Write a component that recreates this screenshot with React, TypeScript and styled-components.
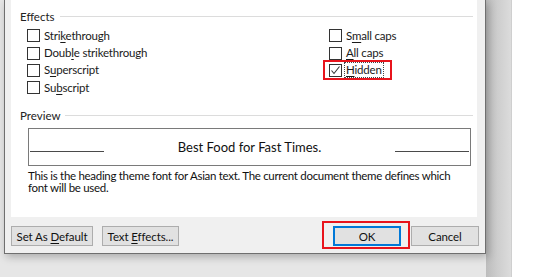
import * as React from "react";
import styled, { createGlobalStyle } from "styled-components";

const GlobalStyle = createGlobalStyle`
    html, body {
        margin: 0;
        padding: 0;
        background: #ffffff;
        overflow: hidden;
    }
    body {
        font-family: Lato, "Noto Sans", sans-serif;
        font-size: 11.5px;
        color: #1a1a1a;
    }
`;

interface IEffect {
    before: string;
    key: string;
    after: string;
    checked?: boolean;
    focused?: boolean;
}

const leftEffects: IEffect[] = [
    { before: "Stri", key: "k", after: "ethrough" },
    { before: "Doub", key: "l", after: "e strikethrough" },
    { before: "S", key: "u", after: "perscript" },
    { before: "Su", key: "b", after: "script" }
];

const rightEffects: IEffect[] = [
    { before: "S", key: "m", after: "all caps" },
    { before: "", key: "A", after: "ll caps" },
    { before: "", key: "H", after: "idden", checked: true, focused: true }
];

const CheckItem: React.FC<{ effect: IEffect }> = ({ effect }) => (
    <Row>
        <Box>
            {effect.checked && (
                <svg width="11" height="11" viewBox="0 0 11 11">
                    <path d="M1.5 5.5 L4 8.5 L9.5 1.5" fill="none" stroke="#333" strokeWidth="1.1" />
                </svg>
            )}
        </Box>
        <Label $focused={effect.focused}>
            {effect.before}
            <u>{effect.key}</u>
            {effect.after}
        </Label>
        {effect.focused && <Highlight $top={-2} $left={-6} $width={69} $height={20} />}
    </Row>
);

const App: React.FC = () => {
    return (
        <>
            <GlobalStyle />
            <Backdrop>
                <Dialog>
                    <Panel>
                        <Legend>
                            <span>Effects</span>
                        </Legend>
                        <EffectsGrid>
                            <Column>
                                {leftEffects.map(e => (
                                    <CheckItem key={e.before + e.key} effect={e} />
                                ))}
                            </Column>
                            <Column>
                                {rightEffects.map(e => (
                                    <CheckItem key={e.before + e.key} effect={e} />
                                ))}
                            </Column>
                        </EffectsGrid>
                        <Legend $gap={11}>
                            <span>Preview</span>
                        </Legend>
                        <PreviewBox>
                            <Rule />
                            <PreviewText>Best Food for Fast Times.</PreviewText>
                            <Rule />
                        </PreviewBox>
                        <Note>
                            This is the heading theme font for Asian text. The current document theme defines which
                            <br />
                            font will be used.
                        </Note>
                    </Panel>
                    <ButtonRow>
                        <Button $width={82}>
                            Set As <u>D</u>efault
                        </Button>
                        <Button $width={77}>
                            Text <u>E</u>ffects...
                        </Button>
                        <Spacer />
                        <OkWrap>
                            <Button $width={68} $primary>
                                OK
                            </Button>
                            <Highlight $top={-5} $left={-11} $width={88} $height={28} />
                        </OkWrap>
                        <Button $width={68}>Cancel</Button>
                    </ButtonRow>
                </Dialog>
                <Strip />
            </Backdrop>
        </>
    );
};

const Backdrop = styled.div`
    display: flex;
    align-items: flex-start;
    width: 512px;
    height: 277px;
    padding-left: 4px;
    box-sizing: border-box;
    background: #e6e6e6;
    border-right: 1px solid #cfcfcf;
`;

const Dialog = styled.div`
    width: 482px;
    height: 254px;
    box-sizing: border-box;
    display: flex;
    flex-direction: column;
    background: #f0f0f0;
    border: 1px solid #6f6f6f;
    border-top: none;
    box-shadow: 2px 3px 8px rgba(0, 0, 0, 0.25);
    position: relative;
    z-index: 1;
`;

const Strip = styled.div`
    flex: 1;
    align-self: stretch;
    background: linear-gradient(to right, #bcbcbc, #cdcdcd 45%, #dcdcdc);
`;

const Panel = styled.div`
    margin: 0 8px 0 6px;
    height: 217px;
    box-sizing: border-box;
    background: #ffffff;
    padding: 8px 4px 0 9px;
`;

const Legend = styled.div<{ $gap?: number }>`
    display: flex;
    align-items: center;
    height: 16px;
    margin-top: ${p => p.$gap || 0}px;
    color: #222;
    span {
        padding-right: 5px;
    }
    &::after {
        content: "";
        flex: 1;
        border-top: 1px solid #dcdcdc;
    }
`;

const EffectsGrid = styled.div`
    display: grid;
    grid-template-columns: 302px 1fr;
    margin: 3px 0 0 7px;
`;

const Column = styled.div`
    display: flex;
    flex-direction: column;
`;

const Row = styled.div`
    position: relative;
    display: flex;
    align-items: center;
    height: 17.4px;
    gap: 3px;
`;

const Box = styled.div`
    width: 13px;
    height: 13px;
    box-sizing: border-box;
    border: 1px solid #333;
    background: #fff;
    display: flex;
    align-items: center;
    justify-content: center;
`;

const Label = styled.span<{ $focused?: boolean }>`
    line-height: 14px;
    padding: 0 1px;
    letter-spacing: -0.2px;
    outline: ${p => (p.$focused ? "1px dotted #444" : "none")};
    u {
        text-underline-offset: 2px;
    }
`;

const Highlight = styled.div<{ $top: number; $left: number; $width: number; $height: number }>`
    position: absolute;
    top: ${p => p.$top}px;
    left: ${p => p.$left}px;
    width: ${p => p.$width}px;
    height: ${p => p.$height}px;
    box-sizing: border-box;
    border: 2px solid #e8141c;
    pointer-events: none;
`;

const PreviewBox = styled.div`
    margin: 4px 0 0 8px;
    width: 443px;
    height: 38px;
    box-sizing: border-box;
    border: 1px solid #7a7a7a;
    display: flex;
    align-items: center;
    padding: 0 1px;
`;

const Rule = styled.div`
    width: 74px;
    height: 1px;
    margin-top: 10px;
    background: #4a4a4a;
`;

const PreviewText = styled.div`
    flex: 1;
    text-align: center;
    font-size: 13px;
    color: #111;
`;

const Note = styled.div`
    margin: 4px 0 0 8px;
    line-height: 12px;
    letter-spacing: -0.3px;
    white-space: nowrap;
    color: #111;
`;

const ButtonRow = styled.div`
    display: flex;
    align-items: flex-start;
    gap: 9px;
    padding: 9px 6px 0 6px;
`;

const Spacer = styled.div`
    flex: 1;
`;

const OkWrap = styled.div`
    position: relative;
    display: flex;
    margin-right: 1px;
`;

const Button = styled.button<{ $width: number; $primary?: boolean }>`
    width: ${p => p.$width}px;
    height: 20px;
    padding: 0;
    box-sizing: border-box;
    font-family: Lato, "Noto Sans", sans-serif;
    font-size: 11.5px;
    letter-spacing: -0.1px;
    color: #111;
    background: #e1e1e1;
    border: ${p => (p.$primary ? "2px solid #0078d7" : "1px solid #adadad")};
    u {
        text-underline-offset: 2px;
    }
`;

export default App;
